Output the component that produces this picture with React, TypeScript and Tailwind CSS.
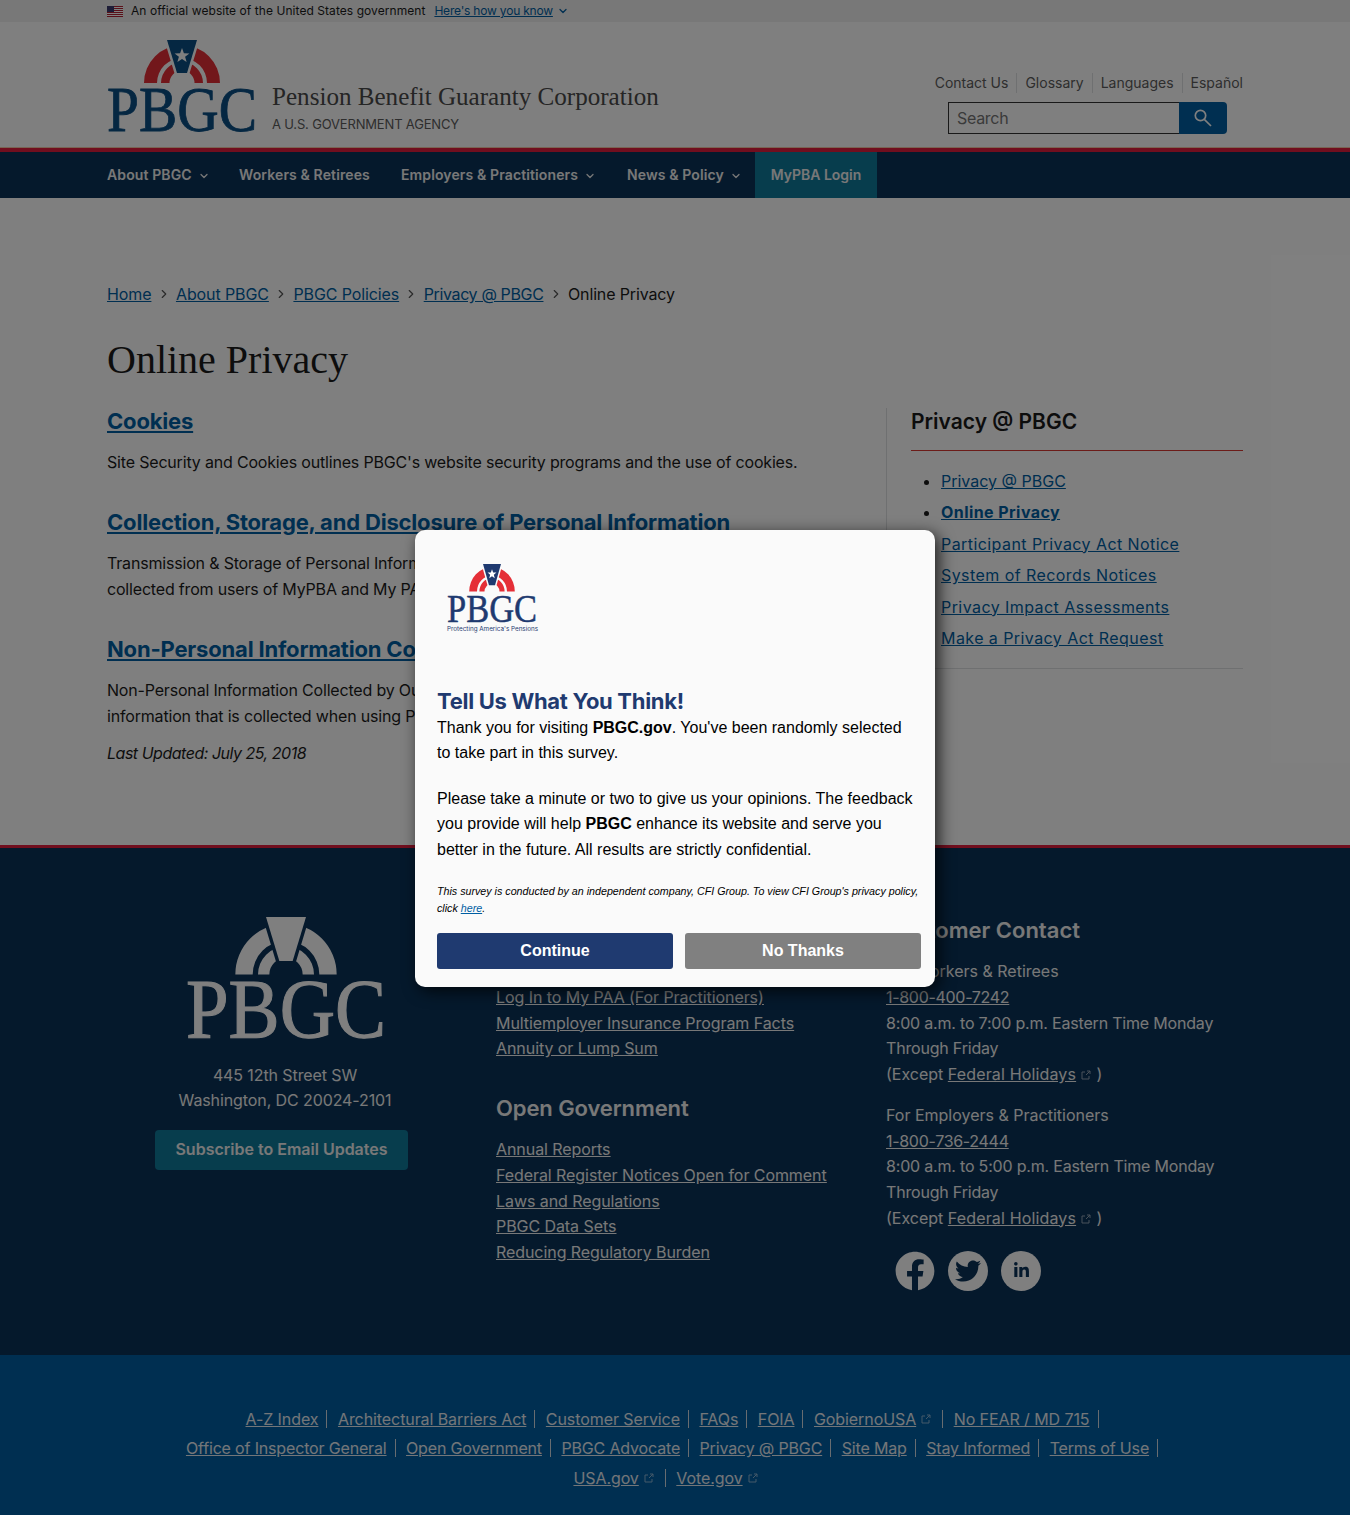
import { ChevronDown, ChevronRight } from 'lucide-react';
import { FaFacebook, FaLinkedinIn, FaTwitter } from 'react-icons/fa';

const sans = "font-['Inter','Noto_Sans',sans-serif]";

function Logo({ arch, key1, star, text, gap, className }: { arch: string; key1: string; star: string; text: string; gap: string; className: string }) {
  const band = (R: number, r: number) => `M${75 - R} 43A${R} ${R} 0 0 1 ${75 + R} 43L${75 + r} 43A${r} ${r} 0 0 0 ${75 - r} 43Z`;
  return (
    <svg viewBox="0 0 150 92" preserveAspectRatio="none" className={className}>
      <path d={band(38, 25)} fill={arch} />
      <path d={band(21, 12.5)} fill={arch} />
      <path d="M60 0H90L80 33H70Z" fill={key1} stroke={gap} strokeWidth="5" paintOrder="stroke" />
      <path d="M75 8l1.9 5.2 5.5.2-4.3 3.4 1.5 5.3-4.6-3.1-4.6 3.1 1.5-5.3-4.3-3.4 5.5-.2Z" fill={star} />
      <text x="0" y="90.5" fontFamily="'Liberation Serif',serif" fontSize="64" textLength="150" lengthAdjust="spacingAndGlyphs" fill={text} stroke={text} strokeWidth="0.8">PBGC</text>
    </svg>
  );
}

function Flag() {
  return (
    <svg viewBox="0 0 16 11" className="w-4 h-[11px]">
      <rect width="16" height="11" fill="#fff" />
      {[0, 2, 4, 6, 8, 10].map(y => <rect key={y} y={y} width="16" height="1" fill="#b22234" />)}
      <rect width="7" height="6" fill="#3c3b6e" />
    </svg>
  );
}

function Ext() {
  return (
    <svg viewBox="0 0 12 12" className="inline-block w-3 h-3 ml-1 align-[-1px] opacity-60" fill="none" stroke="currentColor" strokeWidth="1">
      <path d="M9 7v3H2V3h3M6 6l4-4M7 2h3v3" />
    </svg>
  );
}

function NavItem({ label, caret, className }: { label: string; caret?: boolean; className: string }) {
  return (
    <div className={`flex items-center font-semibold text-sm text-[#f0f0f0] tracking-[0.12px] ${className}`}>
      {label}
      {caret && <ChevronDown size={12} strokeWidth={2.5} className="ml-[6px] mt-[2px]" />}
    </div>
  );
}

function Crumb({ label, className }: { label: string; className?: string }) {
  return (
    <>
      <a className={`text-[#005ea2] underline ${className ?? 'tracking-[-0.1px]'}`}>{label}</a>
      <ChevronRight size={14} className="mx-[5.25px] text-[#555]" />
    </>
  );
}

function BottomLink({ label, ext, last }: { label: string; ext?: boolean; last?: boolean }) {
  return (
    <span className={`flex items-center h-[18px] ${ext ? 'pr-[10px]' : 'pr-2'} border-r border-[#d0d8e0] ${last ? '' : 'mr-[10.5px]'}`}>
      <a className="underline">{label}</a>
      {ext && <Ext />}
    </span>
  );
}

const sideLinks = ['Privacy @ PBGC', 'Online Privacy', 'Participant Privacy Act Notice', 'System of Records Notices', 'Privacy Impact Assessments', 'Make a Privacy Act Request'];

export default function App() {
  return (
    <div className={`relative w-[1350px] h-[1515px] overflow-hidden bg-white text-[#1b1b1b] ${sans}`}>
      <div className="h-[22px] bg-[#f0f0f0] px-[107px] flex items-center text-xs">
        <Flag />
        <span className="ml-2 tracking-[0.06px]">An official website of the United States government</span>
        <a className="ml-[9px] text-[#005ea2] underline tracking-[-0.2px]">Here's how you know</a>
        <ChevronDown size={12} strokeWidth={2.5} className="ml-1 text-[#005ea2]" />
      </div>

      <header className="h-[126px] px-[107px] pt-[18px] flex">
        <Logo arch="#e52f37" key1="#0b4f85" star="#fff" text="#0b4f85" gap="#fff" className="w-[150px] h-[92px]" />
        <div className="ml-[15px] mt-[42px]">
          <div className="font-['Liberation_Serif',serif] text-[25.1px] leading-[30px] text-[#4a4a4a]">Pension Benefit Guaranty Corporation</div>
          <div className="text-[13px] leading-5 mt-[2px] text-[#5c5c5c] tracking-[-0.17px]">A U.S. GOVERNMENT AGENCY</div>
        </div>
        <div className="ml-auto flex flex-col items-end">
          <div className="mt-[33px] flex items-center h-5 text-sm text-[#5c5c5c]">
            <span className="pr-2 border-r border-[#dfe1e2]">Contact Us</span>
            <span className="px-2 border-r border-[#dfe1e2]">Glossary</span>
            <span className="px-2 border-r border-[#dfe1e2]">Languages</span>
            <span className="pl-2">Español</span>
          </div>
          <div className="flex mt-[9px] mr-4 h-8">
            <input placeholder="Search" className="w-[232px] h-8 border border-[#333] bg-white px-2 text-base tracking-[-0.3px] placeholder:text-[#757575]" />
            <div className="w-12 h-8 -ml-px bg-[#005ea2] rounded-r flex items-center justify-center text-white">
              <svg viewBox="0 0 20 20" className="w-5 h-5" fill="none" stroke="currentColor" strokeWidth="1.7">
                <circle cx="7.5" cy="7.5" r="5.2" />
                <path d="M11.3 11.3L18 18" />
              </svg>
            </div>
          </div>
        </div>
      </header>

      <div className="h-px -mt-px bg-[#f3c9a8]" />
      <div className="h-1 bg-[#e31c3d]" />
      <nav className="h-[46px] bg-[#0b3359] flex px-[107px]">
        <NavItem label="About PBGC" caret className="w-[132px]" />
        <NavItem label="Workers & Retirees" className="w-[162px]" />
        <NavItem label="Employers & Practitioners" caret className="w-[226px]" />
        <NavItem label="News & Policy" caret className="w-[128px]" />
        <div className="w-[122px] bg-[#0f7a9b] flex items-center justify-center font-semibold text-sm text-[#f0f0f0]">MyPBA Login</div>
      </nav>

      <main className="h-[647px] px-[107px] pt-[84px]">
        <div className="flex items-center h-6 text-base">
          <Crumb label="Home" />
          <Crumb label="About PBGC" />
          <Crumb label="PBGC Policies" />
          <Crumb label="Privacy @ PBGC" className="tracking-[-0.36px]" />
          <span className="tracking-[-0.14px]">Online Privacy</span>
        </div>
        <h1 className="font-['Liberation_Serif',serif] text-[40px] leading-[48px] mt-[30px]">Online Privacy</h1>
        <div className="flex mt-6">
          <div className="w-[779px] text-base leading-[26px] tracking-[-0.18px]">
            <h2 className="text-[22px] font-bold leading-[26px] text-[#005ea2] underline">Cookies</h2>
            <p className="mt-[15px]">Site Security and Cookies outlines PBGC's website security programs and the use of cookies.</p>
            <h2 className="mt-[34px] text-[22px] font-bold leading-[26px] text-[#005ea2] underline">Collection, Storage, and Disclosure of Personal Information</h2>
            <p className="mt-[15px]">Transmission & Storage of Personal Information outlines how PBGC handles personal information<br />collected from users of MyPBA and My PAA and who it may be shared with.</p>
            <h2 className="mt-[34px] text-[22px] font-bold leading-[26px] text-[#005ea2] underline">Non-Personal Information Collected</h2>
            <p className="mt-[15px]">Non-Personal Information Collected by Our Website describes the non-personal<br />information that is collected when using PBGC.gov.</p>
            <p className="mt-[11px] italic tracking-[-0.48px]">Last Updated: July 25, 2018</p>
          </div>
          <aside className="w-[357px] h-[261px] border-l border-[#dfe1e2] pl-6 pt-px box-border">
            <h2 className="text-[21px] font-semibold leading-[26px]">Privacy @ PBGC</h2>
            <div className="mt-[15px] border-t border-[#d83933]" />
            <ul className="list-disc pl-[30px] mt-[15px] text-base leading-[31.4px] text-[#005ea2] border-b border-[#dfe1e2] pb-[14px]">
              {sideLinks.map(s => (
                <li key={s} className={`underline marker:text-[#1b1b1b] ${s === 'Privacy @ PBGC' ? '' : 'tracking-[0.43px]'} ${s === 'Online Privacy' ? 'font-bold' : ''}`}>{s}</li>
              ))}
            </ul>
          </aside>
        </div>
      </main>

      <footer className="h-[510px] border-t-[3px] border-[#e31c3d] bg-[#0b3359] text-[#f0f0f0] px-[107px] pt-[69px] flex text-base leading-[25.75px]">
        <div className="w-[356px] flex flex-col">
          <Logo arch="#fff" key1="#fff" star="#fff" text="#fff" gap="#0b3359" className="w-[200px] h-[123px] ml-[79px] shrink-0" />
          <div className="mt-[23px] text-center leading-[25px] tracking-[-0.1px]">445 12th Street SW<br />Washington, DC 20024-2101</div>
          <div className="mt-[17px] ml-[48px] w-[253px] h-10 pb-px rounded-sm bg-[#0f7a9b] flex items-center justify-center font-semibold">Subscribe to Email Updates</div>
        </div>
        <div className="ml-[33px] w-[390px]">
          <h3 className="text-[22px] font-semibold leading-[26px]">Quick Links</h3>
          <div className="mt-4 flex flex-col underline tracking-[-0.07px]">
            <a>Log In to MyPBA</a>
            <a>Log In to My PAA (For Practitioners)</a>
            <a>Multiemployer Insurance Program Facts</a>
            <a>Annuity or Lump Sum</a>
          </div>
          <h3 className="mt-[33px] text-[22px] font-semibold leading-[26px] tracking-[-0.1px]">Open Government</h3>
          <div className="mt-4 flex flex-col underline tracking-[-0.07px]">
            <a>Annual Reports</a>
            <a>Federal Register Notices Open for Comment</a>
            <a>Laws and Regulations</a>
            <a>PBGC Data Sets</a>
            <a>Reducing Regulatory Burden</a>
          </div>
        </div>
        <div className="w-[357px]">
          <h3 className="text-[22px] font-semibold leading-[26px]">Customer Contact</h3>
          <div className="mt-4">
            <div>For Workers & Retirees</div>
            <a className="underline tracking-[-0.3px]">1-800-400-7242</a>
            <div className="tracking-[-0.19px]">8:00 a.m. to 7:00 p.m. Eastern Time Monday Through Friday</div>
            <div>(Except <a className="underline tracking-[0.15px]">Federal Holidays</a><Ext /> )</div>
          </div>
          <div className="mt-[15px]">
            <div>For Employers & Practitioners</div>
            <a className="underline tracking-[-0.3px]">1-800-736-2444</a>
            <div className="tracking-[-0.19px]">8:00 a.m. to 5:00 p.m. Eastern Time Monday Through Friday</div>
            <div>(Except <a className="underline tracking-[0.15px]">Federal Holidays</a><Ext /> )</div>
          </div>
          <div className="mt-[19px] ml-[9px] flex gap-[13px] text-[#0b3359]">
            <FaFacebook size={40} className="text-white" />
            <div className="w-10 h-10 rounded-full bg-white flex items-center justify-center"><FaTwitter size={26} /></div>
            <div className="w-10 h-10 rounded-full bg-white flex items-center justify-center"><FaLinkedinIn size={17} /></div>
          </div>
        </div>
      </footer>

      <div className="h-[160px] bg-[#005ea2] text-[#e6ecf2] pt-[49px] flex flex-col items-center text-base tracking-[-0.08px]">
        <div className="flex items-center h-[29.5px] pr-[6px]">
          <BottomLink label="A-Z Index" />
          <BottomLink label="Architectural Barriers Act" />
          <BottomLink label="Customer Service" />
          <BottomLink label="FAQs" />
          <BottomLink label="FOIA" />
          <BottomLink label="GobiernoUSA" ext />
          <BottomLink label="No FEAR / MD 715" last />
        </div>
        <div className="flex items-center h-[29.5px] pr-[6px] tracking-[-0.16px]">
          <BottomLink label="Office of Inspector General" />
          <BottomLink label="Open Government" />
          <BottomLink label="PBGC Advocate" />
          <BottomLink label="Privacy @ PBGC" />
          <BottomLink label="Site Map" />
          <BottomLink label="Stay Informed" />
          <BottomLink label="Terms of Use" last />
        </div>
        <div className="flex items-center h-[29.5px] pr-[18px]">
          <BottomLink label="USA.gov" ext />
          <a className="underline">Vote.gov</a>
          <Ext />
        </div>
      </div>

      {/* survey overlay */}
      <div className="absolute inset-0 bg-black/50" />
      <div className="absolute left-[415px] top-[530px] w-[520px] h-[457px] rounded-[10px] bg-[#fafafa] px-[22px] shadow-[4px_4px_16px_rgba(0,0,0,0.75)]">
        <div className="ml-[10px] pt-[34px] w-[92px]">
          <Logo arch="#e52f37" key1="#1f3a70" star="#fff" text="#1f3a70" gap="#fafafa" className="w-[90px] h-[59px]" />
          <div className="text-[6.3px] leading-[9px] mt-[2px] whitespace-nowrap text-[#1f3a70]">Protecting America's Pensions</div>
        </div>
        <h2 className="mt-[54px] text-[22px] font-bold leading-[26px] text-[#1f3a70] tracking-[-0.3px]">Tell Us What You Think!</h2>
        <div className="mt-px font-['Liberation_Sans',sans-serif] text-base leading-[25.4px] text-black">
          <p>Thank you for visiting <b>PBGC.gov</b>. You've been randomly selected to take part in this survey.</p>
          <p className="mt-[20.2px]">Please take a minute or two to give us your opinions. The feedback you provide will help <b>PBGC</b> enhance its website and serve you better in the future. All results are strictly confidential.</p>
          <p className="mt-[20.3px] w-[484px] text-[10.7px] leading-[17px] italic">This survey is conducted by an independent company, CFI Group. To view CFI Group's privacy policy, click <a className="text-[#005ea2] underline">here</a>.</p>
          <div className="mt-[16px] flex gap-3 font-bold">
            <div className="w-[236px] shrink-0 h-9 rounded-[3px] bg-[#1f3a70] text-white flex items-center justify-center">Continue</div>
            <div className="w-[236px] shrink-0 h-9 rounded-[3px] bg-[#808080] text-white flex items-center justify-center">No Thanks</div>
          </div>
        </div>
      </div>
    </div>
  );
}
